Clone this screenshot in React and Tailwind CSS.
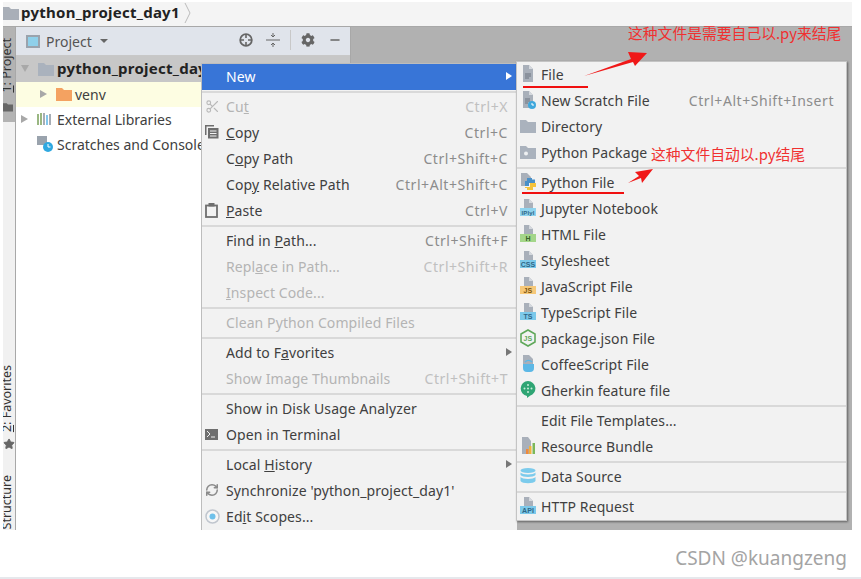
import { Minus, Scissors, RefreshCw, Star } from "lucide-react";
import { FaCog } from "react-icons/fa";

const FONT = "font-['Noto_Sans','Noto_Sans_CJK_SC',sans-serif]";
const RED_TEXT = "absolute text-[14.8px] leading-[18px] text-[#f03030] font-['Noto_Sans_CJK_SC','Noto_Sans',sans-serif] whitespace-nowrap";

function Folder({ color = "#aab2bd", className = "" }) {
  return (
    <svg width="16" height="14" viewBox="0 0 16 14" className={className}>
      <path d="M0 1h6l2 2h8v11H0z" fill={color} />
    </svg>
  );
}

function FileBase({ children }) {
  return (
    <svg width="16" height="18" viewBox="0 0 16 18">
      <path d="M3 0h6l4 4v13H3z" fill="#a9b0ba" />
      <path d="M9 0l4 4H9z" fill="#d5d9de" />
      {children}
    </svg>
  );
}

function BadgeFile({ label, color, text = "#2f6685", fs = 7 }) {
  return (
    <svg width="16" height="18" viewBox="0 0 16 18">
      <path d="M4 0h5l4 4v6H4z" fill="#a9b0ba" />
      <path d="M9 0l4 4H9z" fill="#d5d9de" />
      <rect x="0" y="9" width="16" height="8" fill={color} />
      <text x="8" y="15.500" fontSize={fs} fontWeight="700" fontFamily="Liberation Sans" textAnchor="middle" fill={text}>
        {label}
      </text>
    </svg>
  );
}

const icons = {
  file: (
    <FileBase>
      <path d="M5 9h6M5 11h6M5 13h4" stroke="#6d7480" strokeWidth="1" />
    </FileBase>
  ),
  scratch: (
    <FileBase>
      <path d="M5 8h5M5 10h5M5 12h3" stroke="#6d7480" strokeWidth="1" />
      <circle cx="12" cy="14" r="4" fill="#40a8dc" />
      <path d="M12 12v2h2" stroke="#fff" fill="none" />
    </FileBase>
  ),
  dir: <Folder />,
  pkg: (
    <svg width="16" height="14" viewBox="0 0 16 14">
      <path d="M0 1h6l2 2h8v11H0z" fill="#aab2bd" />
      <circle cx="6" cy="8.500" r="2" fill="#eef0f2" />
    </svg>
  ),
  python: (
    <svg width="16" height="18" viewBox="0 0 16 18">
      <path d="M1 0h6l4 4v5H7v4H1z" fill="#a9b0ba" />
      <path d="M7 5h5v1.500h3V10H9v3H5V8h2z" fill="#4a90c8" />
      <path d="M10 10h6v4h-3v3H7v-2H5v-1h5z" fill="#f5c33b" />
    </svg>
  ),
  jupyter: <BadgeFile label="IPlyl" color="#8fd3ee" fs={6} />,
  html: <BadgeFile label="H" color="#a4d68a" text="#37632a" />,
  css: <BadgeFile label="CSS" color="#7cc9ea" />,
  js: <BadgeFile label="JS" color="#f6c878" text="#7a5410" />,
  ts: <BadgeFile label="TS" color="#7cc9ea" />,
  node: (
    <svg width="16" height="18" viewBox="0 0 16 18">
      <path d="M8 1l7 4v8l-7 4-7-4V5z" fill="none" stroke="#5fa85a" strokeWidth="1.600" />
      <text x="8" y="12" fontSize="7" fontWeight="700" fontFamily="Liberation Sans" textAnchor="middle" fill="#5fa85a">
        JS
      </text>
    </svg>
  ),
  coffee: (
    <svg width="16" height="18" viewBox="0 0 16 18">
      <path d="M3 0h6l4 4v5H3z" fill="#a9b0ba" />
      <path d="M3 9h11v4a4 4 0 0 1-4 4H7a4 4 0 0 1-4-4z" fill="#5cb8e6" />
      <path d="M5 7c2-2 5-2 7 0" stroke="#5cb8e6" strokeWidth="1.500" fill="none" />
    </svg>
  ),
  gherkin: (
    <svg width="16" height="18" viewBox="0 0 16 18">
      <path d="M8 0a7.500 7.500 0 0 1 2 14.700L7 17v-2.100A7.500 7.500 0 0 1 8 0z" fill="#2fa574" />
      <g fill="#c8ecd9">
        <circle cx="8" cy="4" r="1" />
        <circle cx="4.500" cy="7.500" r="1" />
        <circle cx="11.500" cy="7.500" r="1" />
        <circle cx="8" cy="11" r="1" />
        <circle cx="8" cy="7.500" r="1" />
      </g>
    </svg>
  ),
  bundle: (
    <svg width="16" height="18" viewBox="0 0 16 18">
      <path d="M2 0h6l3 4v13H2z" fill="#a9b0ba" />
      <rect x="6" y="12" width="2.500" height="5" fill="#ef8a3c" />
      <rect x="9" y="9" width="2.500" height="8" fill="#f2b13d" />
      <rect x="12.500" y="6" width="2.500" height="11" fill="#7cb85a" />
    </svg>
  ),
  db: (
    <svg width="16" height="16" viewBox="0 0 16 16">
      <ellipse cx="8" cy="2.500" rx="7.500" ry="2.500" fill="#7ccbec" />
      <path d="M.5 4.500C2 7 14 7 15.500 4.500V7C14 9.500 2 9.500 .5 7z" fill="#7ccbec" />
      <path d="M.5 9C2 11.500 14 11.500 15.500 9v4c-1.500 3-13.500 3-15 0z" fill="#7ccbec" />
    </svg>
  ),
  api: <BadgeFile label="API" color="#7cc9ea" />,
  cut: <Scissors size={15} strokeWidth={1.800} className="text-[#b9b9b9]" />,
  copy: (
    <svg width="14" height="14" viewBox="0 0 14 14" fill="none">
      <path d="M.75 10V.75H9" stroke="#6e6e6e" strokeWidth="1.500" />
      <rect x="3" y="3" width="10.500" height="10.500" fill="#6e6e6e" />
      <path d="M5 6h6.500M5 8.500h6.500M5 11h6.500" stroke="#f2f2f2" />
    </svg>
  ),
  paste: (
    <svg width="13" height="15" viewBox="0 0 13 15" fill="none">
      <rect x="1" y="2.500" width="11" height="11.500" stroke="#6e6e6e" strokeWidth="1.800" />
      <rect x="3.500" y="0" width="6" height="3.500" fill="#6e6e6e" />
    </svg>
  ),
  terminal: (
    <svg width="13" height="11" viewBox="0 0 13 11">
      <rect width="13" height="11" fill="#6e6e6e" />
      <path d="M2 2l3 3-3 3M6 8h4" stroke="#eee" fill="none" />
    </svg>
  ),
  sync: <RefreshCw size={14} strokeWidth={2.600} className="text-[#8a8a8a]" />,
  scopes: (
    <svg width="15" height="15" viewBox="0 0 15 15">
      <circle cx="7.500" cy="7.500" r="6.500" fill="#f6f6f6" stroke="#c0c6ce" strokeWidth="1.500" />
      <circle cx="7.500" cy="7.500" r="3" fill="#6ec0ea" />
    </svg>
  ),
};

const leftMenu = [
  { label: "New", active: true, arrow: true },
  "sep",
  { label: <>Cu<u>t</u></>, icon: "cut", short: "Ctrl+X", off: true },
  { label: <><u>C</u>opy</>, icon: "copy", short: "Ctrl+C" },
  { label: <>C<u>o</u>py Path</>, short: "Ctrl+Shift+C" },
  { label: <>Cop<u>y</u> Relative Path</>, short: "Ctrl+Alt+Shift+C" },
  { label: <><u>P</u>aste</>, icon: "paste", short: "Ctrl+V" },
  "sep",
  { label: <>Find in <u>P</u>ath...</>, short: "Ctrl+Shift+F" },
  { label: <>Repl<u>a</u>ce in Path...</>, short: "Ctrl+Shift+R", off: true },
  { label: <><u>I</u>nspect Code...</>, off: true },
  "sep",
  { label: "Clean Python Compiled Files", off: true },
  "sep",
  { label: <>Add to F<u>a</u>vorites</>, arrow: true },
  { label: "Show Image Thumbnails", short: "Ctrl+Shift+T", off: true },
  "sep",
  { label: "Show in Disk Usage Analyzer" },
  { label: "Open in Terminal", icon: "terminal" },
  "sep",
  { label: <>Local <u>H</u>istory</>, arrow: true },
  { label: "Synchronize 'python_project_day1'", icon: "sync" },
  { label: <>Ed<u>i</u>t Scopes...</>, icon: "scopes" },
];

const rightMenu = [
  { label: "File", icon: "file" },
  { label: "New Scratch File", icon: "scratch", short: "Ctrl+Alt+Shift+Insert" },
  { label: "Directory", icon: "dir" },
  { label: "Python Package", icon: "pkg" },
  "sep",
  { label: "Python File", icon: "python" },
  { label: "Jupyter Notebook", icon: "jupyter" },
  { label: "HTML File", icon: "html" },
  { label: "Stylesheet", icon: "css" },
  { label: "JavaScript File", icon: "js" },
  { label: "TypeScript File", icon: "ts" },
  { label: "package.json File", icon: "node" },
  { label: "CoffeeScript File", icon: "coffee" },
  { label: "Gherkin feature file", icon: "gherkin" },
  "sep",
  { label: "Edit File Templates..." },
  { label: "Resource Bundle", icon: "bundle" },
  "sep",
  { label: "Data Source", icon: "db" },
  "sep",
  { label: "HTTP Request", icon: "api" },
];

function MenuRows({ items, iconBox, rowPad }) {
  return items.map((item, i) => {
    if (item === "sep") {
      return (
        <div key={i} className="h-1 flex items-center">
          <div className="h-[2px] w-full bg-[#d9d9d9]" />
        </div>
      );
    }
    return (
      <div
        key={i}
        className={`h-[26px] flex items-center pb-[2px] tracking-[0.1px] ${rowPad} ${item.active ? "bg-[#3875d7] text-white" : item.off ? "text-[#b4b4b4]" : "text-[#404040]"}`}
      >
        <span className={`${iconBox} flex shrink-0`}>{icons[item.icon]}</span>
        <span className="flex-1 whitespace-nowrap">{item.label}</span>
        {item.short && (
          <span className={`whitespace-nowrap tracking-[0.55px] ${item.off ? "text-[#c0c0c0]" : "text-[#8c8c8c]"}`}>
            {item.short}
          </span>
        )}
        {item.arrow && (
          <span className={`w-0 h-0 border-y-[4px] border-y-transparent border-l-[6px] -mr-1 ${item.active ? "border-l-white" : "border-l-[#777]"}`} />
        )}
      </div>
    );
  });
}

function TreeRow({ className = "", pad, arrow, children }) {
  return (
    <div className={`flex items-center pb-px whitespace-nowrap overflow-hidden ${className}`} style={{ paddingLeft: pad }}>
      {arrow === "right" && <span className="w-0 h-0 border-y-[4px] border-y-transparent border-l-[7px] border-l-[#a8a8a8] mr-[9px]" />}
      {arrow === "down" && <span className="w-0 h-0 border-x-[4px] border-x-transparent border-t-[7px] border-t-[#a8a8a8] mr-[9px]" />}
      {children}
    </div>
  );
}

function VerticalTab({ className = "", children }) {
  return (
    <div className={`[writing-mode:vertical-rl] rotate-180 text-[12.500px] leading-[13px] -ml-[3px] whitespace-nowrap text-[#333] ${className}`}>
      {children}
    </div>
  );
}

function Arrow({ className, d }) {
  return (
    <svg className={`absolute ${className}`} width="70" height="40" viewBox="0 0 70 40">
      <path d={d} fill="#f01818" />
    </svg>
  );
}

export default function App() {
  return (
    <div className={`relative w-[861px] h-[579px] overflow-hidden bg-white text-[14px] ${FONT}`}>
      <div className="h-[2px]" />
      <div className="ml-[3px] w-[849px] h-[528px] flex flex-col">
        {/* breadcrumb */}
        <div className="h-[25px] shrink-0 pb-[3px] bg-[#f4f4f4] border-b border-[#a8a8a8] flex items-center">
          <Folder color="#a9afb8" className="mr-[1px]" />
          <span className="font-bold text-[15px] tracking-[0.25px] text-[#222] ml-[1px]">python_project_day1</span>
          <svg width="8" height="20" viewBox="0 0 8 20" className="ml-1"><path d="M1 0l5 10-5 10" stroke="#bbb" fill="none" /></svg>
        </div>

        <div className="flex-1 flex min-h-0">
          {/* tool window strip */}
          <div className="w-[13px] shrink-0 bg-[#f1f1f1] border-r border-[#a8a8a8] flex flex-col items-start overflow-hidden">
            <div className="w-full h-[95px] shrink-0 bg-[#b3b3b3] pt-[11px] flex flex-col items-start">
              <VerticalTab><u>1</u>: Project</VerticalTab>
              <Folder color="#666" className="w-[10px] h-[10px] mt-[9px]" />
            </div>
            <div className="flex-1" />
            <VerticalTab className="mb-[5px]"><u>2</u>: Favorites</VerticalTab>
            <Star size={12} fill="#666" className="text-[#666] mb-[25px]" />
            <VerticalTab className="mb-px">Structure</VerticalTab>
          </div>

          {/* project panel */}
          <div className="w-[335px] shrink-0 bg-white border-r border-[#a8a8a8]">
            <div className="h-[29px] bg-[#e0e4eb] border-b border-[#c8c8c8] flex items-center pl-[10px] pr-[8px] text-[#555]">
              <span className="w-[14px] h-[13px] bg-[#8fd0ea] border-2 border-[#9aa3ad] mr-[6px]" />
              <span>Project</span>
              <span className="w-0 h-0 border-x-[4px] border-x-transparent border-t-[4px] border-t-[#666] ml-[8px]" />
              <span className="flex-1" />
              <div className="flex items-center gap-[13px] pb-[3px] text-[#666]">
                <svg width="14" height="14" viewBox="0 0 14 14" fill="none" stroke="#666">
                  <circle cx="7" cy="7" r="5.800" strokeWidth="1.800" />
                  <path d="M7 2v3M7 9v3M2 7h3M9 7h3" strokeWidth="1.600" />
                </svg>
                <svg width="14" height="14" viewBox="0 0 14 14" stroke="#666" fill="none"><path d="M0 7h14M7 0v4M5 2l2 2 2-2M7 14v-4M5 12l2-2 2 2" /></svg>
                <span className="w-px h-[20px] bg-[#c8c8c8] -mx-[3px]" />
                <FaCog size={14} />
                <Minus size={14} strokeWidth={2.200} />
              </div>
            </div>
            <TreeRow pad={5} arrow="down" className="h-[26px] bg-[#c7c7c7]">
              <Folder className="mr-[3px]" />
              <span className="font-bold text-[15px] tracking-[0.25px] text-[#222]">python_project_day1</span>
            </TreeRow>
            <TreeRow pad={24} arrow="right" className="h-[25px] bg-[#fdfde2]">
              <Folder color="#f4a261" className="mr-[3px]" />
              <span className="text-[#404040]">venv</span>
            </TreeRow>
            <TreeRow pad={5} arrow="right" className="h-[25px]">
              <svg width="16" height="14" viewBox="0 0 16 14" className="mr-[4px]">
                <path d="M1 2v11M4 1v12" stroke="#7aa05a" strokeWidth="1.500" />
                <path d="M7 1v12" stroke="#8a929c" strokeWidth="1.500" />
                <path d="M10 3v10" stroke="#5ab4e6" strokeWidth="1.500" />
                <path d="M13 2v11" stroke="#8a929c" strokeWidth="1.500" />
              </svg>
              <span className="text-[#404040]">External Libraries</span>
            </TreeRow>
            <TreeRow pad={21} className="h-[25px]">
              <svg width="17" height="17" viewBox="0 0 17 17" className="mr-[3px]">
                <rect x="0" y="0" width="10" height="9" fill="#9aa3ad" />
                <circle cx="11" cy="11" r="5" fill="#2fa8e0" />
                <path d="M11 8v3h2.500" stroke="#fff" fill="none" />
              </svg>
              <span className="text-[#404040]">Scratches and Consoles</span>
            </TreeRow>
          </div>

          {/* editor area */}
          <div className="flex-1 bg-[#b1b1b1]" />
        </div>
      </div>

      {/* context menu */}
      <div className="absolute left-[201px] top-[63px] w-[316px] h-[467px] overflow-hidden bg-[#f2f2f2] border-l border-t border-[#bdbdbd]">
        <MenuRows items={leftMenu} iconBox="w-[24px] pl-[3px]" rowPad="pr-[9px]" />
      </div>

      {/* New submenu */}
      <div className="absolute left-[516px] top-[61px] w-[331px] bg-[#f2f2f2] border border-[#c4c4c4] shadow-[1px_1px_2px_rgba(0,0,0,0.45)]">
        <MenuRows items={rightMenu} iconBox="w-[24px] pl-[3px]" rowPad="pr-[12px]" />
      </div>

      {/* red annotations */}
      <span className={`${RED_TEXT} left-[628px] top-[24px]`}>这种文件是需要自己以.py来结尾</span>
      <span className={`${RED_TEXT} left-[651px] top-[145px]`}>这种文件自动以.py结尾</span>
      <div className="absolute left-[523px] top-[86px] w-[65px] h-[2px] bg-[#f01010]" />
      <div className="absolute left-[522px] top-[192px] w-[102px] h-[2px] bg-[#f01010]" />
      <Arrow className="left-[583px] top-[50px]" d="M1 26 L48 9 L45 2 L64 3 L52 16 L50 12 Z" />
      <Arrow className="left-[628px] top-[166px]" d="M0 17 L11 10 L7 6 L25 3 L14 17 L13 12 Z" />

      {/* watermark */}
      <span className="absolute right-[14px] top-[547px] text-[19px] leading-[22px] text-[#a4a4a4] whitespace-nowrap">CSDN @kuangzeng</span>
      <div className="absolute left-0 right-0 bottom-0 h-[2px] bg-[#e6e8ec]" />
    </div>
  );
}
